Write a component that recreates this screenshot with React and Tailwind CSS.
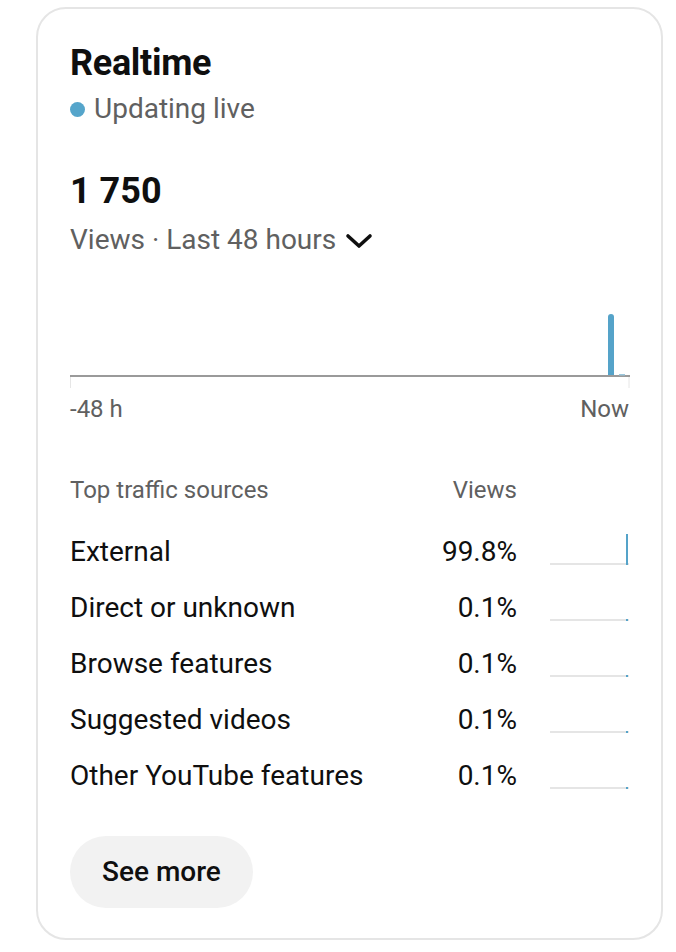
import React from "react";

const sources = [
  { name: "External", pct: "99.8%", share: 0.998 },
  { name: "Direct or unknown", pct: "0.1%", share: 0.001 },
  { name: "Browse features", pct: "0.1%", share: 0.001 },
  { name: "Suggested videos", pct: "0.1%", share: 0.001 },
  { name: "Other YouTube features", pct: "0.1%", share: 0.001 },
];

const Chevron = () => (
  <svg width="30" height="20" viewBox="0 0 30 20" className="ml-[8px] mt-[2px]">
    <polyline
      points="4,5 15,15 26,5"
      fill="none"
      stroke="#0f0f0f"
      strokeWidth="3.6"
      strokeLinecap="round"
      strokeLinejoin="round"
    />
  </svg>
);

const Chart = () => (
  <svg width="560" height="90" viewBox="0 0 560 90" className="mt-[42px] block">
    <line x1="0" y1="76" x2="560" y2="76" stroke="#9a9a9a" strokeWidth="2" />
    <line x1="0.5" y1="77" x2="0.5" y2="88" stroke="#e6e6e6" strokeWidth="1" />
    <line x1="559" y1="77" x2="559" y2="88" stroke="#e6e6e6" strokeWidth="1" />
    <path d="M538 75 V17 a3 3 0 0 1 6 0 V75 Z" fill="#55a3c9" />
    <rect x="549" y="74" width="6" height="1.5" fill="#9cc8de" />
  </svg>
);

const SourceBar = ({ share }) => (
  <div className="relative w-[79px] h-[56px]">
    <div className="absolute left-0 right-0 bottom-[15px] h-[2px] bg-[#e5e5e5]" />
    <div
      className="absolute right-[1px] bottom-[15px] w-[2px] bg-[#55a3c9]"
      style={{ height: Math.max(2, share * 31) }}
    />
  </div>
);

export default function App() {
  return (
    <div className="w-[676px] h-[952px] bg-white pt-[7px] font-['Roboto',sans-serif]">
      <div className="ml-[36px] w-[627px] h-[933px] border-2 border-[#e5e5e5] rounded-[30px] px-[32px] pt-[32px]">
        <h1 className="text-[36px] leading-[44px] font-bold text-[#0f0f0f] tracking-[-0.3px]">
          Realtime
        </h1>
        <div className="mt-[6px] flex items-center text-[28px] leading-[36px] text-[#606060]">
          <span className="w-[15px] h-[15px] rounded-full bg-[#55a5cb] mr-[9px]" />
          Updating live
        </div>

        <div className="mt-[42px] text-[36px] leading-[44px] font-bold text-[#0f0f0f]">
          1 750
        </div>
        <div className="mt-[9px] flex items-center text-[28px] leading-[36px] text-[#606060]">
          Views · Last 48 hours
          <Chevron />
        </div>

        <Chart />
        <div className="mt-[3px] flex justify-between text-[24px] leading-[32px] text-[#606060]">
          <span>-48 h</span>
          <span>Now</span>
        </div>

        <div className="mt-[49px] flex text-[24px] leading-[32px] text-[#606060]">
          <span className="flex-1">Top traffic sources</span>
          <span className="w-[120px] text-right">Views</span>
          <span className="w-[112px]" />
        </div>

        <div className="mt-[18px]">
          {sources.map((s) => (
            <div
              key={s.name}
              className="flex items-center h-[56px] text-[28px] leading-[36px] text-[#0f0f0f]"
            >
              <span className="flex-1">{s.name}</span>
              <span className="w-[120px] text-right">{s.pct}</span>
              <span className="w-[33px]" />
              <SourceBar share={s.share} />
            </div>
          ))}
        </div>

        <button
          type="button"
          className="mt-[32px] h-[72px] px-[32px] rounded-full bg-[#f2f2f2] text-[28px] font-medium text-[#0f0f0f]"
        >
          See more
        </button>
      </div>
    </div>
  );
}
